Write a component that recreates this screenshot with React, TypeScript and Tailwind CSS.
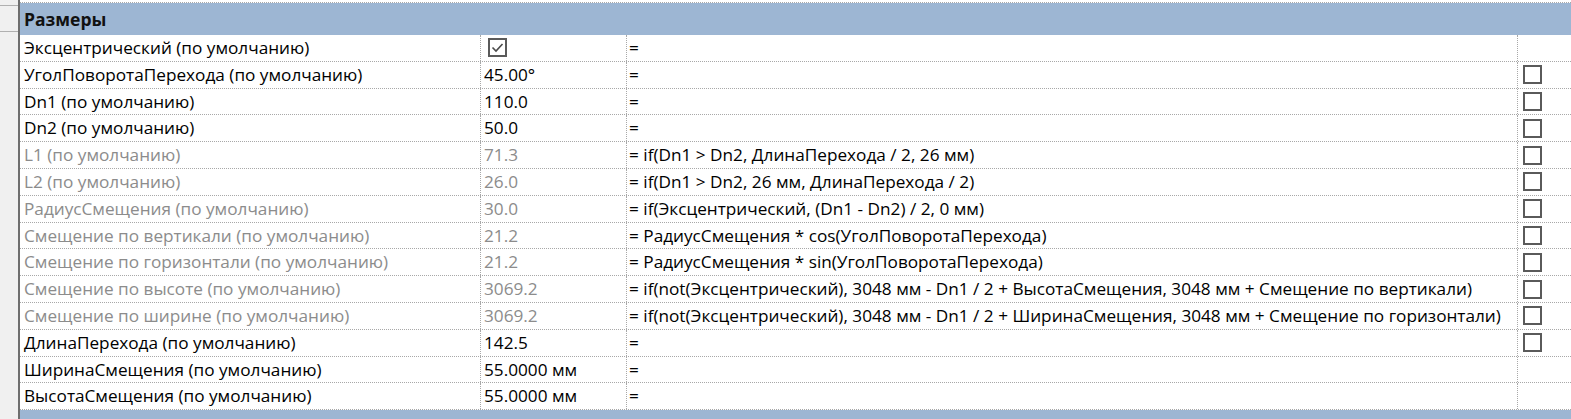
import React from "react";

interface Param {
  name: string;
  value: string;
  formula: string;
  grey?: boolean;
  check?: boolean;
  lock?: boolean;
}

const params: Param[] = [
  { name: "Эксцентрический (по умолчанию)", value: "", formula: "=", check: true },
  { name: "УголПоворотаПерехода (по умолчанию)", value: "45.00°", formula: "=", lock: true },
  { name: "Dn1 (по умолчанию)", value: "110.0", formula: "=", lock: true },
  { name: "Dn2 (по умолчанию)", value: "50.0", formula: "=", lock: true },
  { name: "L1 (по умолчанию)", value: "71.3", formula: "= if(Dn1 > Dn2, ДлинаПерехода / 2, 26 мм)", grey: true, lock: true },
  { name: "L2 (по умолчанию)", value: "26.0", formula: "= if(Dn1 > Dn2, 26 мм, ДлинаПерехода / 2)", grey: true, lock: true },
  { name: "РадиусСмещения (по умолчанию)", value: "30.0", formula: "= if(Эксцентрический, (Dn1 - Dn2) / 2, 0 мм)", grey: true, lock: true },
  { name: "Смещение по вертикали (по умолчанию)", value: "21.2", formula: "= РадиусСмещения * cos(УголПоворотаПерехода)", grey: true, lock: true },
  { name: "Смещение по горизонтали (по умолчанию)", value: "21.2", formula: "= РадиусСмещения * sin(УголПоворотаПерехода)", grey: true, lock: true },
  { name: "Смещение по высоте (по умолчанию)", value: "3069.2", formula: "= if(not(Эксцентрический), 3048 мм - Dn1 / 2 + ВысотаСмещения, 3048 мм + Смещение по вертикали)", grey: true, lock: true },
  { name: "Смещение по ширине (по умолчанию)", value: "3069.2", formula: "= if(not(Эксцентрический), 3048 мм - Dn1 / 2 + ШиринаСмещения, 3048 мм + Смещение по горизонтали)", grey: true, lock: true },
  { name: "ДлинаПерехода (по умолчанию)", value: "142.5", formula: "=", lock: true },
  { name: "ШиринаСмещения (по умолчанию)", value: "55.0000 мм", formula: "=" },
  { name: "ВысотаСмещения (по умолчанию)", value: "55.0000 мм", formula: "=" },
];

function Box({ checked }: { checked?: boolean }) {
  return (
    <span className="inline-flex w-[19px] h-[19px] border-2 border-[#5a5a5a] bg-white items-center justify-center">
      {checked && (
        <svg width="15" height="15" viewBox="0 0 15 15">
          <path d="M2.5 7.5 L6 11 L12.5 4" fill="none" stroke="#4a4a4a" strokeWidth="1.6" />
        </svg>
      )}
    </span>
  );
}

export default function App() {
  return (
    <div className="w-[1571px] h-[419px] overflow-hidden bg-white flex font-['Open_Sans',sans-serif] text-[17.2px] text-black">
      <div className="w-[20px] shrink-0 bg-[#f0f0f0] border-r-2 border-[#6e6e6e] flex flex-col">
        <div className="h-[6px] border-b border-[#b0b0b0]" />
        <div className="h-[26px] border-b border-[#b0b0b0]" />
      </div>
      <div className="flex-1 flex flex-col">
        <div className="h-[3px] border-b border-dotted border-[#a8a8a8]" />
        <div className="h-[32px] bg-[#9db6d3] flex items-center pl-[4px] font-bold text-[17.5px] text-[#111]">Размеры</div>
        {params.map((p, i) => (
          <div key={i} className="h-[26.8px] shrink-0 grid grid-cols-[461px_146px_891px_1fr] border-b border-dotted border-[#a8a8a8]">
            <div className={`pl-[4px] flex items-center whitespace-nowrap overflow-hidden border-r border-dotted border-[#a8a8a8] ${p.grey ? "text-[#8c8c8c]" : ""}`}>{p.name}</div>
            <div className={`pl-[3px] flex items-center whitespace-nowrap overflow-hidden border-r border-dotted border-[#a8a8a8] ${p.grey ? "text-[#8c8c8c]" : ""}`}>
              {p.check ? <span className="pl-[4px] flex"><Box checked /></span> : p.value}
            </div>
            <div className="pl-[2px] flex items-center whitespace-nowrap overflow-hidden border-r border-dotted border-[#a8a8a8]">{p.formula}</div>
            <div className="pl-[5px] flex items-center">{p.lock && <Box />}</div>
          </div>
        ))}
        <div className="flex-1 bg-[#9db6d3]" />
      </div>
    </div>
  );
}
